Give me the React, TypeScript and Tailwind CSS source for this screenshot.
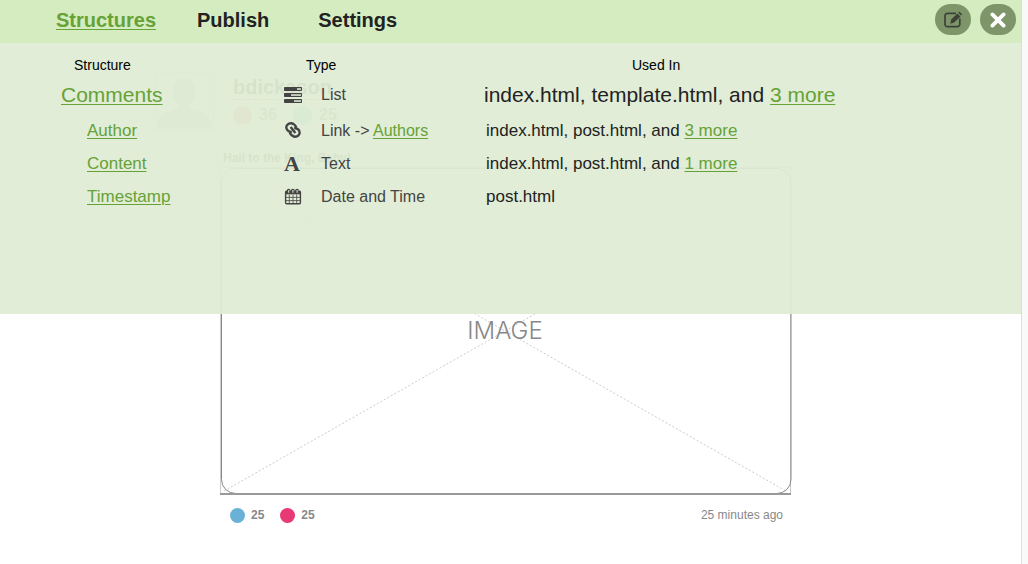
import type { ReactNode } from 'react';

type Field = {
  name: string;
  icon: ReactNode;
  type: ReactNode;
  files: string;
  more?: string;
  primary?: boolean;
};

const linkClass = 'text-[#66a236] underline underline-offset-2 decoration-1';

function ListIcon() {
  return (
    <svg className="h-[18px] w-[18px]" viewBox="0 0 18 18" fill="#444" aria-hidden="true">
      {[1, 7, 13].map((y, i) => (
        <g key={y}>
          <rect x="0" y={y} width="18" height="4" rx="0.8" />
          <rect x={[13, 7, 10][i]} y={y + 1.2} width={[4, 10, 7][i]} height="1.7" fill="#d3dec8" />
        </g>
      ))}
    </svg>
  );
}

function ChainIcon() {
  return (
    <svg className="h-[18px] w-[18px]" viewBox="0 0 18 18" fill="none" stroke="#444" strokeWidth="2.4" aria-hidden="true">
      <g transform="translate(9 8)">
        <path d="M10.2 -2.4 L-1 -2.4" stroke="none" />
        <path d="M3.2 -2.6C2.8 -4.4 0.6 -6.4 -1.6 -6.7C-4.6 -7 -7.2 -4.6 -6.6 -1.9C-6.2 0.2 -3.6 2.4 -1.2 1.6" />
        <path d="M-3.2 2.6C-2.8 4.4 -0.6 6.4 1.6 6.7C4.6 7 7.2 4.6 6.6 1.9C6.2 -0.2 3.6 -2.4 1.2 -1.6" />
        <path d="M-2.4 -3L2.4 3" />
      </g>
    </svg>
  );
}

function LetterIcon() {
  return (
    <span className="font-['Liberation_Serif',serif] text-[22px] leading-5 font-bold" aria-hidden="true">
      A
    </span>
  );
}

function CalendarIcon() {
  return (
    <svg className="h-[18px] w-[18px]" viewBox="0 0 18 18" fill="none" stroke="#444" aria-hidden="true">
      <rect x="1.6" y="3.2" width="14.8" height="12.6" rx="1" strokeWidth="1.4" />
      <path d="M1.6 4.8h14.8" strokeWidth="3" />
      <path d="M5.3 6.5v9M9 6.5v9M12.7 6.5v9M2 9.4h14M2 12.6h14" strokeWidth="0.8" />
      <path d="M3.4 4.8V2.6a1.3 1.3 0 0 1 2.6 0M7.6 4.8V2.6a1.3 1.3 0 0 1 2.6 0M11.8 4.8V2.6a1.3 1.3 0 0 1 2.6 0" strokeWidth="1.2" />
      <path d="M4.7 2.4v2.4M8.9 2.4v2.4M13.1 2.4v2.4" stroke="#e1edd5" strokeWidth="1" />
    </svg>
  );
}

const fields: Field[] = [
  { name: 'Comments', icon: <ListIcon />, type: 'List', files: 'index.html, template.html, and ', more: '3 more', primary: true },
  {
    name: 'Author',
    icon: <ChainIcon />,
    type: (
      <>
        Link -&gt; <a href="#authors" className={linkClass}>Authors</a>
      </>
    ),
    files: 'index.html, post.html, and ',
    more: '3 more',
  },
  { name: 'Content', icon: <LetterIcon />, type: 'Text', files: 'index.html, post.html, and ', more: '1 more' },
  { name: 'Timestamp', icon: <CalendarIcon />, type: 'Date and Time', files: 'post.html' },
];

function StructuresTable() {
  return (
    <table className="w-full table-fixed border-collapse text-left text-[17px] text-[#222]">
      <colgroup>
        <col className="w-[284px]" />
        <col className="w-[200px]" />
        <col />
      </colgroup>
      <thead>
        <tr className="h-8 text-sm text-black">
          <th scope="col" className="pt-[11px] pl-[74px] font-normal">Structure</th>
          <th scope="col" className="pt-[11px] pl-[22px] font-normal">Type</th>
          <th scope="col" className="pt-[11px] pl-[148px] font-normal">Used In</th>
        </tr>
      </thead>
      <tbody>
        {fields.map((f) => (
          <tr key={f.name} className={f.primary ? 'h-[39px] text-[21px]' : 'h-[33px]'}>
            <td className={f.primary ? 'pl-[61px]' : 'pl-[87px]'}>
              <a href={'#' + f.name.toLowerCase()} className={linkClass}>{f.name}</a>
            </td>
            <td>
              <div className="flex items-center text-base text-[#444]">
                <span className="flex w-[37px] shrink-0 items-center">{f.icon}</span>
                <span className="whitespace-nowrap">{f.type}</span>
              </div>
            </td>
            <td className={f.primary ? '' : 'pl-0.5'}>
              {f.files}
              {f.more && <a href="#usage" className={linkClass}>{f.more}</a>}
            </td>
          </tr>
        ))}
      </tbody>
    </table>
  );
}

function Toolbar() {
  return (
    <header className="flex h-[43px] items-start justify-between bg-[#d5ecc1] pt-1 pr-[5px] pl-14">
      <nav className="flex gap-[41px] text-xl leading-8 font-bold text-[#222]">
        <a href="#structures" className={linkClass}>Structures</a>
        <a href="#publish" className="pr-2">Publish</a>
        <a href="#settings">Settings</a>
      </nav>
      <div className="flex gap-[9px]">
        <button type="button" aria-label="Edit" className="flex h-[31px] w-9 items-center justify-center rounded-full bg-[#7e9569]">
          <svg className="h-[18px] w-[18px]" viewBox="0 0 18 18" fill="none" aria-hidden="true">
            <path d="M12 2.4H3.4A2.4 2.4 0 0 0 1 4.8v8.4A2.4 2.4 0 0 0 3.4 15.6h10a2.4 2.4 0 0 0 2.4-2.4V7.6" stroke="#3d4238" strokeWidth="1.7" />
            <path d="M6.2 12.8l1-4.2 6.2-6.2 3 3-6.2 6.2z" fill="#3d4238" />
            <path d="M14.2 1.7l.8-.8q.4-.4.8 0l2 2q.4.4 0 .8l-.8.8z" fill="#3d4238" />
          </svg>
        </button>
        <button type="button" aria-label="Close" className="flex h-[31px] w-9 items-center justify-center rounded-full bg-[#7e9569]">
          <svg className="h-4 w-4" viewBox="0 0 16 16" stroke="#fff" strokeWidth="3.8" strokeLinecap="round" aria-hidden="true">
            <path d="M2.4 2.4l11.2 11.2M13.6 2.4L2.4 13.6" />
          </svg>
        </button>
      </div>
    </header>
  );
}

function ImagePlaceholder() {
  return (
    <div className="grid place-items-center">
      <svg className="col-start-1 row-start-1 w-full" viewBox="0 0 572 328" fill="none" aria-hidden="true">
        <path d="M4 324L566 4M4 4l562 320" stroke="#ccc" strokeDasharray="2 2" />
        <path d="M0.5 0V327.5M0 0.5h571M570.5 0v327" stroke="#ccc" />
        <rect x="1.5" y="1.5" width="569.5" height="325" rx="14" stroke="#888" />
        <path d="M0 327h571" stroke="#999" strokeWidth="2" />
      </svg>
      <span className="col-start-1 row-start-1 pr-0.5 font-[Inter,sans-serif] text-2xl font-light text-[#888]">IMAGE</span>
    </div>
  );
}

function Post() {
  return (
    <article className="max-w-[792px] pt-[72px] text-[#888]">
      <div className="flex gap-[19px] pl-[155px]">
        <svg className="h-[59px] w-[59px] shrink-0" viewBox="0 0 59 59" aria-hidden="true">
          <rect x="0.5" y="0.5" width="58" height="58" fill="#fafafa" stroke="#ddd" />
          <ellipse cx="29" cy="20" rx="11" ry="13.5" fill="#c4c4c4" />
          <path d="M2 57c0-11 6-16 16-19 4-1 5-3 5-6h12c0 3 1 5 5 6 11 3 17 8 17 19z" fill="#c4c4c4" />
        </svg>
        <div>
          <h2 className="w-fit border-b border-dashed border-[#e44] pt-[3px] text-xl leading-6 font-bold text-[#444]">bdickason</h2>
          <div className="flex pt-[5px] text-base leading-5 font-bold">
            <span className="flex w-[60px] items-center gap-[7px]"><i className="h-[19px] w-[19px] rounded-full bg-[#f080a4]" />36</span>
            <span className="flex items-center gap-[7px]"><i className="h-[19px] w-[19px] rounded-full bg-[#7fc0e4]" />25</span>
          </div>
        </div>
      </div>
      <div className="pt-[19px] pl-[220px]">
        <p className="pb-px pl-[3px] text-xs leading-4 font-bold text-[#555]">Hail to the King, Baby!</p>
        <ImagePlaceholder />
        <footer className="flex items-center gap-4 pt-[10px] pr-[9px] pl-[10px] text-xs leading-5">
          <span className="flex items-center gap-1.5 font-bold"><i className="h-[15px] w-[15px] rounded-full bg-[#6ab1d7]" />25</span>
          <span className="flex items-center gap-1.5 font-bold"><i className="h-[15px] w-[15px] rounded-full bg-[#e63975]" />25</span>
          <time className="ml-auto">25 minutes ago</time>
        </footer>
      </div>
    </article>
  );
}

export default function App() {
  return (
    <div className="flex min-h-screen bg-white font-['Liberation_Sans',Arial,sans-serif]">
      <div className="relative min-w-0 flex-1">
        <Post />
        <section aria-label="Structures" className="absolute inset-x-0 top-0">
          <Toolbar />
          <div className="min-h-[271px] bg-[#dfecd3]/94">
            <StructuresTable />
          </div>
        </section>
      </div>
      <div className="w-[7px] border-l border-[#ddd] bg-[#f9f9f9]" />
    </div>
  );
}
